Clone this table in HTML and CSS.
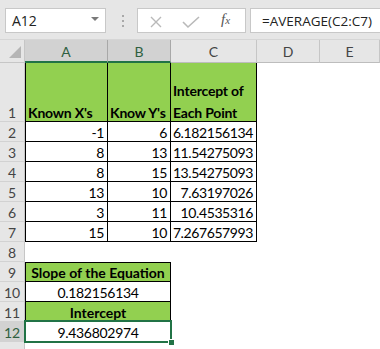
FILE: index.html
```html
<!DOCTYPE html>
<html>
<head>
<meta charset="utf-8">
<link rel="stylesheet" href="styles.css">
</head>
<body>
<div class="toolbar">
  <div class="namebox">
    <span class="nb-text">A12</span>
    <svg class="caret" width="8" height="5" viewBox="0 0 8 5"><path d="M0 0 L8 0 L4 4 Z" fill="#7a7a7a"/></svg>
  </div>
  <svg class="dots" width="4" height="14" viewBox="0 0 4 14">
    <rect x="1" y="0" width="2" height="2" fill="#a8a8a8"/>
    <rect x="1" y="5" width="2" height="2" fill="#a8a8a8"/>
    <rect x="1" y="10" width="2" height="2" fill="#a8a8a8"/>
  </svg>
  <div class="fnbox">
    <svg class="fn-icons" width="70" height="25" viewBox="0 0 70 25">
      <path d="M14 9 L24 19 M24 9 L14 19" stroke="#b9b9b9" stroke-width="1.4" fill="none"/>
      <path d="M46 14 L51 19 L62 9" stroke="#b9b9b9" stroke-width="1.6" fill="none"/>
    </svg>
    <span class="fx">f<span class="fx-x">x</span></span>
  </div>
  <div class="formula">=AVERAGE(C2:C7)</div>
</div>

<div class="sheet">
  <div class="corner"><svg width="13" height="13" viewBox="0 0 13 13"><path d="M12 0 L12 12 L0 12 Z" fill="#b5b5b5"/></svg></div>
  <div class="ch sel">A</div>
  <div class="ch sel">B</div>
  <div class="ch">C</div>
  <div class="ch">D</div>
  <div class="ch">E</div>

  <div class="rh">1</div>
  <div class="c t g l b txt">Known X's</div>
  <div class="c t g b txt">Know Y's</div>
  <div class="c t g b txt wrap"><span class="ln first">Intercept of</span><span class="ln">Each Point</span></div>
  <div class="c"></div><div class="c"></div>

  <div class="rh">2</div>
  <div class="c t l num">-1</div><div class="c t num">6</div><div class="c t num">6.182156134</div>
  <div class="c"></div><div class="c"></div>

  <div class="rh">3</div>
  <div class="c t l num">8</div><div class="c t num">13</div><div class="c t num">11.54275093</div>
  <div class="c"></div><div class="c"></div>

  <div class="rh">4</div>
  <div class="c t l num">8</div><div class="c t num">15</div><div class="c t num">13.54275093</div>
  <div class="c"></div><div class="c"></div>

  <div class="rh">5</div>
  <div class="c t l num">13</div><div class="c t num">10</div><div class="c t num">7.63197026</div>
  <div class="c"></div><div class="c"></div>

  <div class="rh">6</div>
  <div class="c t l num">3</div><div class="c t num">11</div><div class="c t num">10.4535316</div>
  <div class="c"></div><div class="c"></div>

  <div class="rh">7</div>
  <div class="c t l num">15</div><div class="c t num">10</div><div class="c t num">7.267657993</div>
  <div class="c"></div><div class="c"></div>

  <div class="rh">8</div>
  <div class="c"></div><div class="c"></div><div class="c"></div><div class="c"></div><div class="c"></div>

  <div class="rh">9</div>
  <div class="c m top g b ctr">Slope of the Equation</div>
  <div class="c"></div><div class="c"></div><div class="c"></div>

  <div class="rh">10</div>
  <div class="c m ctr nums">0.182156134</div>
  <div class="c"></div><div class="c"></div><div class="c"></div>

  <div class="rh">11</div>
  <div class="c m g b ctr">Intercept</div>
  <div class="c"></div><div class="c"></div><div class="c"></div>

  <div class="rh selrow">12</div>
  <div class="c m ctr nums active">9.436802974<span class="handle"></span></div>
  <div class="c"></div><div class="c"></div><div class="c"></div>

  <div class="rh"></div>
  <div class="c"></div><div class="c"></div><div class="c"></div><div class="c"></div><div class="c"></div>
</div>
</body>
</html>
```

FILE: styles.css
```css
html, body {
  margin: 0;
  padding: 0;
}
body {
  width: 380px;
  height: 349px;
  overflow: hidden;
  background: #ffffff;
  font-family: Lato, "Open Sans", sans-serif;
}

.toolbar {
  display: flex;
  align-items: flex-start;
  height: 40px;
  box-sizing: border-box;
  padding-top: 8px;
  background: #e6e6e6;
  border-bottom: 1px solid #d6d6d6;
}
.namebox {
  margin-left: 5px;
  width: 101px;
  height: 25px;
  box-sizing: border-box;
  border: 1px solid #c8c8c8;
  background: #fff;
  display: flex;
  align-items: center;
  justify-content: space-between;
  padding: 0 6px 0 6px;
  font-family: "Open Sans", sans-serif;
  font-size: 14px;
  color: #222;
}
.caret {
  margin-top: -2px;
}
.dots {
  margin-left: 15px;
  margin-top: 7px;
}
.fnbox {
  margin-left: 12px;
  width: 109px;
  height: 25px;
  box-sizing: border-box;
  border: 1px solid #c8c8c8;
  background: #fff;
  display: flex;
  align-items: center;
}
.fn-icons {
  display: block;
  margin-left: -1px;
}
.fx {
  margin-left: 14px;
  font-family: "Liberation Serif", serif;
  font-style: italic;
  font-size: 15px;
  color: #555;
  margin-top: -2px;
}
.fx-x {
  font-size: 11px;
}
.formula {
  margin-left: 4px;
  flex: 1;
  height: 25px;
  box-sizing: border-box;
  border: 1px solid #c8c8c8;
  border-right: none;
  background: #fff;
  padding-left: 11px;
  display: flex;
  align-items: center;
  font-family: "Open Sans", sans-serif;
  font-size: 13.5px;
  color: #222;
}

.sheet {
  display: grid;
  grid-template-columns: 25px 83px 63px 86px 63px 60px;
  grid-template-rows: 23px 59px repeat(12, 20px);
  font-size: 14px;
  color: #000;
}
.corner {
  background: #e6e6e6;
  border-right: 1px solid #c6c6c6;
  border-bottom: 1px solid #c6c6c6;
  box-sizing: border-box;
  display: flex;
  align-items: flex-end;
  justify-content: flex-end;
  padding: 0 2px 3px 0;
}
.ch {
  background: #e6e6e6;
  border-right: 1px solid #c6c6c6;
  border-bottom: 1px solid #bdbdbd;
  box-sizing: border-box;
  display: flex;
  align-items: center;
  justify-content: center;
  color: #444;
  font-size: 14px;
  padding-top: 1px;
}
.ch.sel {
  background: #d2d2d2;
  color: #2f5f40;
  border-right-color: #a8a8a8;
  border-bottom: 2px solid #217346;
}
.rh {
  grid-column: 1;
  background: #e6e6e6;
  border-right: 1px solid #c6c6c6;
  border-bottom: 1px solid #d2d2d2;
  box-sizing: border-box;
  display: flex;
  align-items: flex-end;
  justify-content: center;
  color: #444;
  font-size: 14px;
  line-height: 15px;
  padding-bottom: 1px;
}
.rh.selrow {
  background: #d2d2d2;
  color: #2f5f40;
}

.c {
  box-sizing: border-box;
  background: #fff;
  display: flex;
  align-items: flex-end;
  line-height: 15px;
  padding-bottom: 1px;
  white-space: nowrap;
  min-width: 0;
}
.t {
  border-right: 1px solid #000;
  border-bottom: 1px solid #000;
}
.l {
  border-left: 1px solid #000;
}
.g {
  background: #92d050;
}
.b {
  font-weight: bold;
}
.txt {
  padding-left: 2px;
  letter-spacing: -0.2px;
}
.wrap {
  flex-direction: column;
  align-items: flex-start;
  justify-content: flex-end;
}
.ln {
  display: block;
}
.ln.first {
  margin-bottom: 7px;
}
.num {
  justify-content: flex-end;
  padding-right: 3px;
  letter-spacing: -0.4px;
}
.nums {
  letter-spacing: -0.3px;
}
.m {
  grid-column: span 2;
  border-left: 1px solid #000;
  border-right: 1px solid #000;
  border-bottom: 1px solid #000;
}
.top {
  border-top: 1px solid #000;
}
.ctr {
  justify-content: center;
}
.active {
  position: relative;
}
.active::after {
  content: "";
  position: absolute;
  left: -2px;
  top: -2px;
  right: -2px;
  bottom: -2px;
  border: 2px solid #217346;
  pointer-events: none;
}
.handle {
  position: absolute;
  right: -5px;
  bottom: -5px;
  width: 5px;
  height: 5px;
  background: #217346;
  border: 1px solid #fff;
  z-index: 2;
}
```
